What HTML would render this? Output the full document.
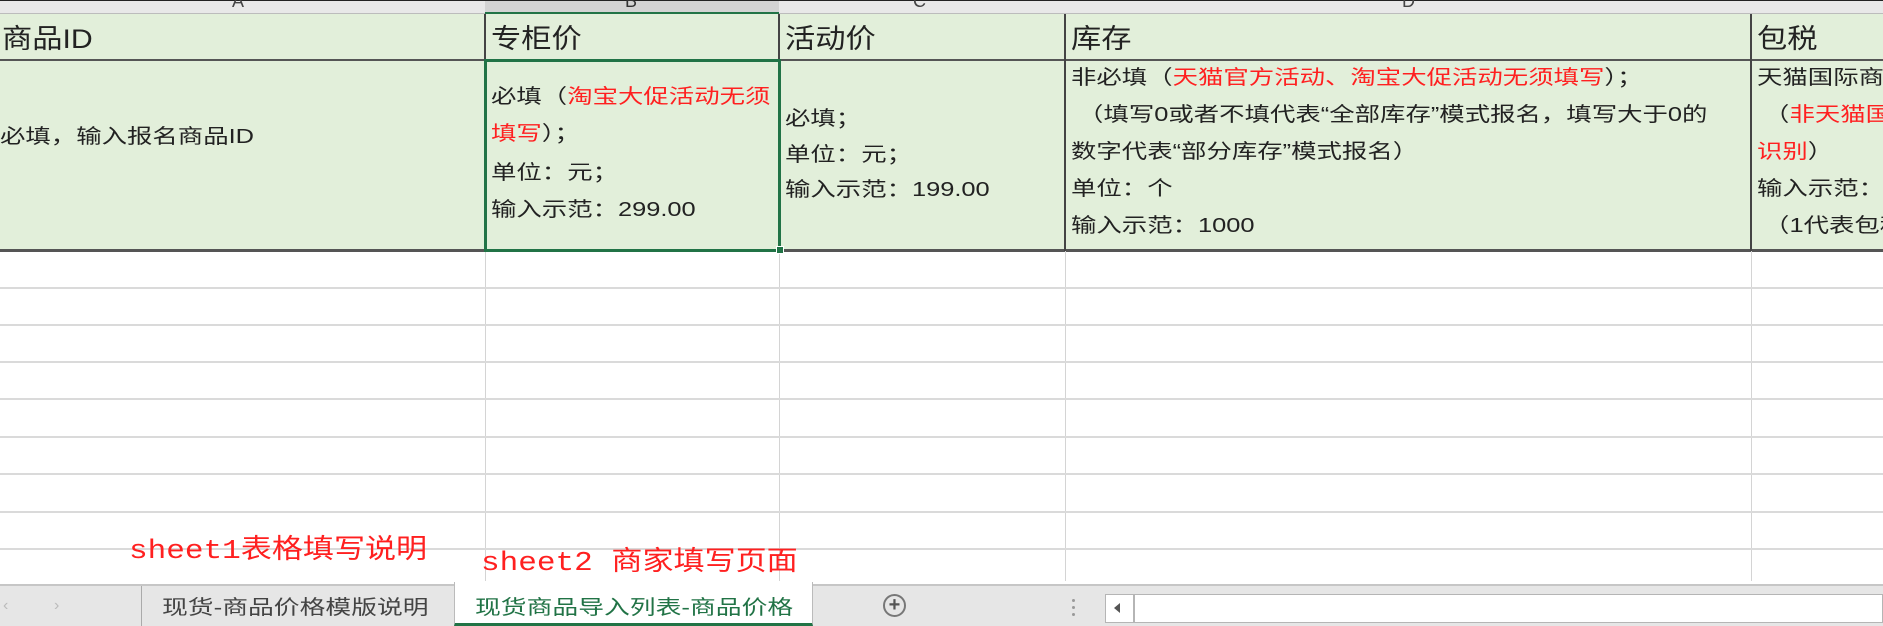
<!DOCTYPE html>
<html><head><meta charset="utf-8">
<style>
*{margin:0;padding:0;box-sizing:border-box}
body{width:1883px;height:626px;overflow:hidden;background:#fff;position:relative;font-family:"Liberation Sans","Noto Sans CJK SC",sans-serif;color:#222}
.a{position:absolute}
.hl{position:absolute;left:0;width:1883px;height:2px;background:#dadada}
.vl{position:absolute;top:14px;width:1px;height:567px;background:#d4d4d4}
.t{position:absolute;font-size:20px;line-height:37px;white-space:nowrap;transform:scaleX(1.27);transform-origin:0 0}
.h{position:absolute;font-size:27px;top:19px;line-height:40px;white-space:nowrap;transform:scaleX(1.12);transform-origin:0 0}
.r{color:#ff2020}
.sx{transform:scaleX(1.15);transform-origin:0 0}
.tx{transform:scaleX(1.29);transform-origin:0 0}
</style></head><body>
<div class="a" style="left:0;top:0;width:1883px;height:14px;background:#e8e8e8;border-top:1px solid #222;border-bottom:1px solid #bcbcbc"></div>
<div class="a" style="left:485px;top:0;width:294px;height:14px;background:#d3d3d3;border-top:1px solid #222;border-bottom:2px solid #217346"></div>
<div class="a" style="left:232px;top:-9px;font-size:18px;color:#444">A</div>
<div class="a" style="left:625px;top:-9px;font-size:18px;color:#333">B</div>
<div class="a" style="left:913px;top:-9px;font-size:18px;color:#444">C</div>
<div class="a" style="left:1402px;top:-9px;font-size:18px;color:#444">D</div>
<div class="a" style="left:0;top:14px;width:1883px;height:237px;background:#e2efda"></div>
<div class="a" style="left:0;top:59px;width:1883px;height:2px;background:#555"></div>
<div class="a" style="left:0;top:249px;width:1883px;height:3px;background:#555"></div>
<div class="vl" style="left:485px"></div>
<div class="vl" style="left:779px"></div>
<div class="vl" style="left:1065px"></div>
<div class="vl" style="left:1751px"></div>
<div class="a" style="left:484px;top:14px;width:2px;height:237px;background:#444"></div>
<div class="a" style="left:778px;top:14px;width:2px;height:237px;background:#444"></div>
<div class="a" style="left:1064px;top:14px;width:2px;height:237px;background:#444"></div>
<div class="a" style="left:1750px;top:14px;width:2px;height:237px;background:#444"></div>
<div class="hl" style="top:287px"></div>
<div class="hl" style="top:324px"></div>
<div class="hl" style="top:361px"></div>
<div class="hl" style="top:398px"></div>
<div class="hl" style="top:436px"></div>
<div class="hl" style="top:473px"></div>
<div class="hl" style="top:511px"></div>
<div class="hl" style="top:548px"></div>
<div class="a" style="left:484px;top:59px;width:297px;height:193px;border:3px solid #217346"></div>
<div class="a" style="left:776px;top:246px;width:8px;height:8px;background:#217346;border:1px solid #fff"></div>
<div class="h" style="left:2px">商品ID</div>
<div class="h" style="left:491px">专柜价</div>
<div class="h" style="left:785px">活动价</div>
<div class="h" style="left:1071px">库存</div>
<div class="h" style="left:1757px">包税</div>
<div class="t" style="left:0;top:119px">必填，输入报名商品ID</div>
<div class="t" style="left:491px;top:79px">必填（<span class="r">淘宝大促活动无须</span></div>
<div class="t" style="left:491px;top:116px"><span class="r">填写</span>）；</div>
<div class="t" style="left:491px;top:155px">单位：元；</div>
<div class="t" style="left:491px;top:192px">输入示范：299.00</div>
<div class="t" style="left:785px;top:101px">必填；</div>
<div class="t" style="left:785px;top:137px">单位：元；</div>
<div class="t" style="left:785px;top:172px">输入示范：199.00</div>
<div class="t" style="left:1071px;top:60px">非必填（<span class="r">天猫官方活动、淘宝大促活动无须填写</span>）；</div>
<div class="t" style="left:1071px;top:97px">&nbsp;（填写0或者不填代表“全部库存”模式报名，填写大于0的</div>
<div class="t" style="left:1071px;top:134px">数字代表“部分库存”模式报名）</div>
<div class="t" style="left:1071px;top:171px">单位：个</div>
<div class="t" style="left:1071px;top:208px">输入示范：1000</div>
<div class="t" style="left:1757px;top:60px">天猫国际商品</div>
<div class="t" style="left:1757px;top:97px">&nbsp;（<span class="r">非天猫国际</span></div>
<div class="t" style="left:1757px;top:134px"><span class="r">识别</span>）</div>
<div class="t" style="left:1757px;top:171px">输入示范：</div>
<div class="t" style="left:1757px;top:208px">&nbsp;（1代表包税</div>
<div class="a r sx" style="left:129px;top:527px;font-size:27px;white-space:nowrap;font-family:'Liberation Mono','Noto Sans CJK SC',monospace">sheet1表格填写说明</div>
<div class="a r sx" style="left:481px;top:539px;font-size:27px;white-space:nowrap;font-family:'Liberation Mono','Noto Sans CJK SC',monospace">sheet2 商家填写页面</div>
<div class="a" style="left:0;top:584px;width:1883px;height:42px;background:#e6e6e6;border-top:2px solid #c6c6c6"></div>
<div class="a" style="left:3px;top:597px;font-size:16px;color:#bbb">‹</div>
<div class="a" style="left:54px;top:597px;font-size:16px;color:#bbb">›</div>
<div class="a" style="left:141px;top:586px;width:1px;height:40px;background:#aaa"></div>
<div class="a tx" style="left:162px;top:591px;font-size:20px;color:#444;white-space:nowrap">现货-商品价格模版说明</div>
<div class="a" style="left:454px;top:582px;width:359px;height:44px;background:#fff;border-left:1px solid #bbb;border-right:1px solid #bbb;border-bottom:3px solid #217346"></div>
<div class="a tx" style="left:475px;top:591px;font-size:20px;color:#217346;white-space:nowrap">现货商品导入列表-商品价格</div>
<div class="a" style="left:883px;top:594px;width:23px;height:23px;border:2px solid #777;border-radius:50%;color:#555;font-size:20px;line-height:18px;text-align:center;font-weight:bold">+</div>
<div class="a" style="left:1072px;top:599px;width:3px;height:3px;background:#999;border-radius:50%"></div>
<div class="a" style="left:1072px;top:606px;width:3px;height:3px;background:#999;border-radius:50%"></div>
<div class="a" style="left:1072px;top:613px;width:3px;height:3px;background:#999;border-radius:50%"></div>
<div class="a" style="left:1105px;top:594px;width:778px;height:29px;background:#fff;border:1px solid #b5b5b5"></div>
<div class="a" style="left:1133px;top:594px;width:2px;height:29px;background:#b5b5b5"></div>
<div class="a" style="left:1114px;top:603px;width:0;height:0;border-top:5px solid transparent;border-bottom:5px solid transparent;border-right:6px solid #555"></div>
</body></html>
